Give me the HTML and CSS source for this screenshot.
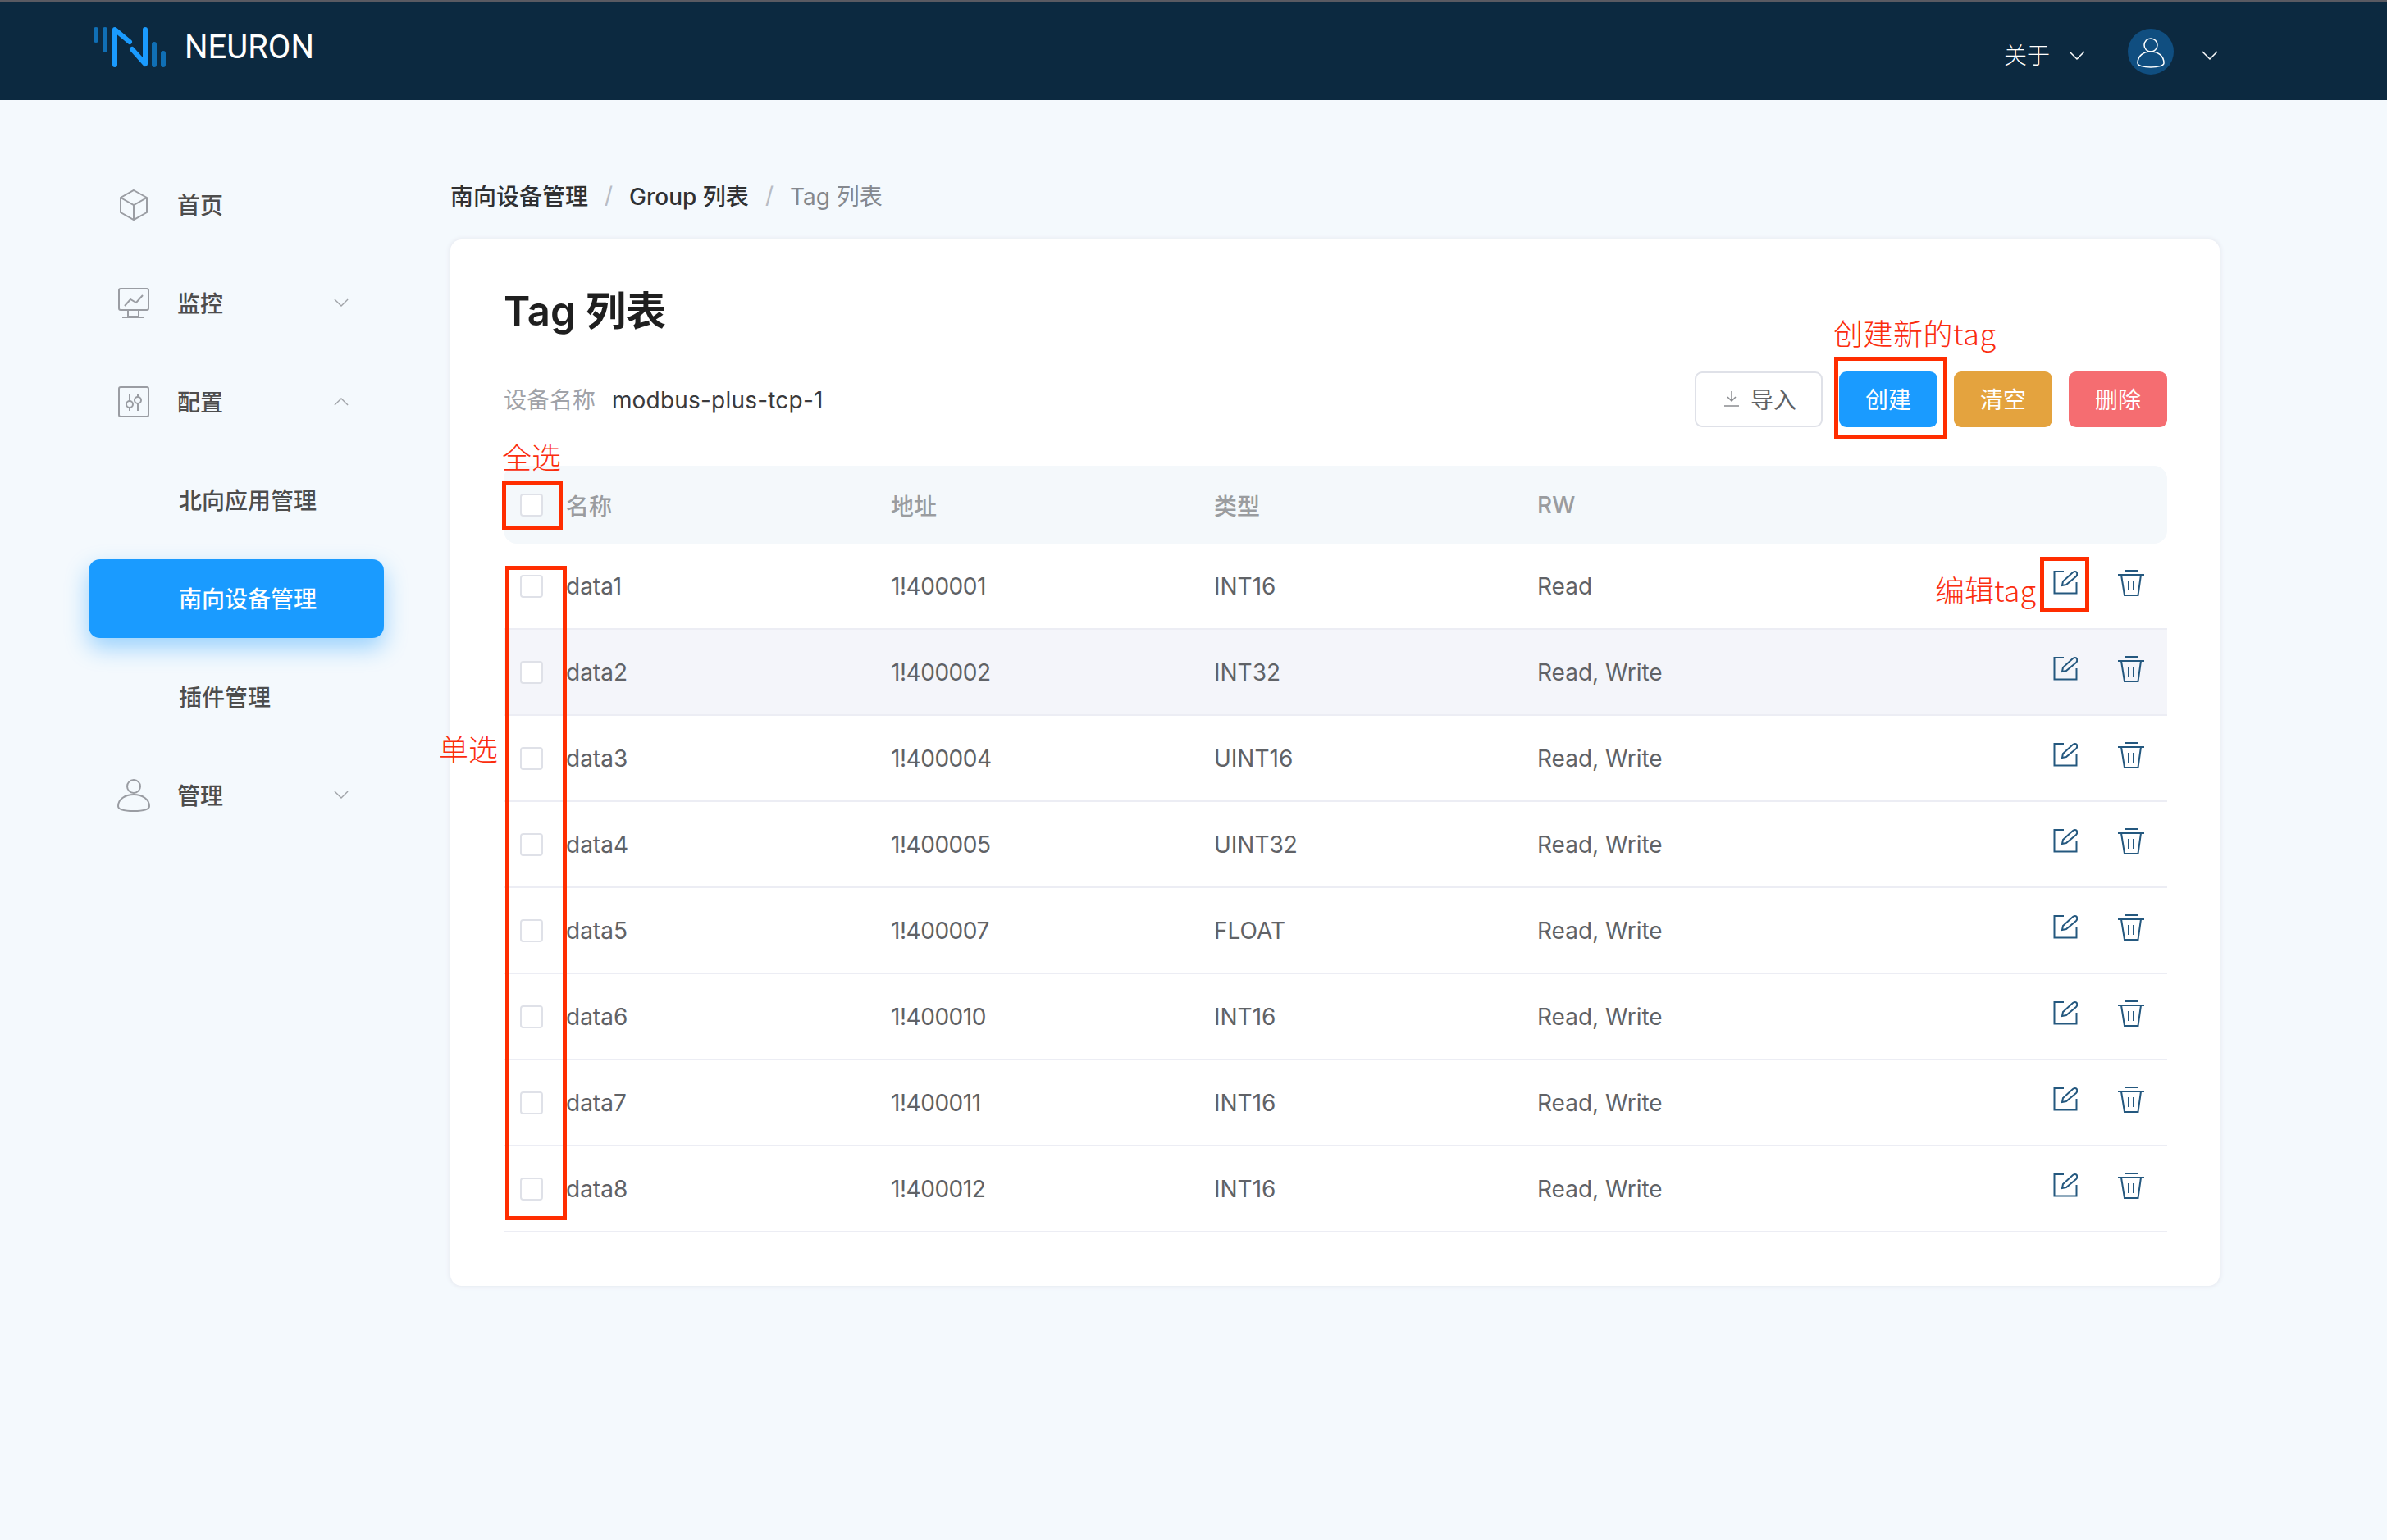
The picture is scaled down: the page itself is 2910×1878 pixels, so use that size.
FILE: index.html
```html
<!DOCTYPE html>
<html lang="zh">
<head>
  <meta charset="utf-8">
  <title>Tag 列表 - Neuron</title>
  <link rel="stylesheet" href="styles.css">
</head>
<body>
<svg class="sprites" width="0" height="0">
  <symbol id="i-edit" viewBox="0 0 30 30"><path d="M13 2H1.500V28.500H28.500V15M11 19L12 14L24 3Q27 1 28.800 3Q30 6 28 8L16 18Z"/></symbol>
  <symbol id="i-trash" viewBox="0 0 32 32"><path d="M8 1H24M0 6H32M4 6L8 31H24.500L28 6M13 13V25M19 13V25"/></symbol>
  <symbol id="i-down" viewBox="0 0 20 12"><path d="M1 1L10 10L19 1"/></symbol>
  <symbol id="i-up" viewBox="0 0 20 12"><path d="M1 11L10 2L19 11"/></symbol>
</svg>

<header class="topbar">
  <div class="brand">
    <svg class="logo" width="92" height="50" viewBox="0 0 92 50">
      <path class="logo-dim" d="M5 4V17M16 4V29M76 22V47M87 33V47"/>
      <path class="logo-main" d="M28 47V4L46 19M49 28L65 46V4"/>
    </svg>
    <span class="brand-name">NEURON</span>
  </div>
  <div class="top-actions">
    <span class="top-link">关于</span>
    <svg class="chev chev-light"><use href="#i-down"/></svg>
    <span class="avatar">
      <svg width="36" height="48" viewBox="0 0 36 48">
        <circle cx="18" cy="13" r="8"/>
        <path d="M2 35C2 26 9 21 18 21C27 21 34 26 34 35C34 38 27 40 18 40C9 40 2 38 2 35Z"/>
      </svg>
    </span>
    <svg class="chev chev-light"><use href="#i-down"/></svg>
  </div>
</header>

<div class="layout">
  <nav class="sidebar">
    <a class="nav-item">
      <svg class="nav-icon" viewBox="0 0 40 40"><path d="M20 2L36 11V29L20 38L4 29V11ZM4 11L20 20L36 11M20 20V38"/></svg>
      <span class="nav-text">首页</span>
    </a>
    <a class="nav-item">
      <svg class="nav-icon" viewBox="0 0 40 40"><rect x="2" y="2" width="36" height="26" rx="2"/><path d="M9 23L16 15L23 19L31 10M13 28V36H26V28M6 37H33"/></svg>
      <span class="nav-text">监控</span>
      <svg class="chev"><use href="#i-down"/></svg>
    </a>
    <a class="nav-item">
      <svg class="nav-icon" viewBox="0 0 40 40"><rect x="2" y="2" width="36" height="36" rx="2"/><circle cx="15" cy="23" r="4"/><circle cx="25" cy="18" r="4"/><path d="M15 10V19M15 27V31M25 10V14M25 22V31"/></svg>
      <span class="nav-text">配置</span>
      <svg class="chev"><use href="#i-up"/></svg>
    </a>
    <a class="nav-item nav-sub"><span class="nav-text">北向应用管理</span></a>
    <a class="nav-item nav-sub nav-active"><span class="nav-text">南向设备管理</span></a>
    <a class="nav-item nav-sub"><span class="nav-text">插件管理</span></a>
    <a class="nav-item">
      <svg class="nav-icon" viewBox="0 0 40 40"><circle cx="20" cy="9" r="8"/><path d="M1 33C1 25 9 19 20 19C31 19 39 25 39 33C39 37 31 39 20 39C9 39 1 37 1 33Z"/></svg>
      <span class="nav-text">管理</span>
      <svg class="chev"><use href="#i-down"/></svg>
    </a>
  </nav>

  <main class="content">
    <div class="breadcrumb">
      <span class="crumb">南向设备管理</span>
      <span class="crumb-sep">/</span>
      <span class="crumb">Group 列表</span>
      <span class="crumb-sep">/</span>
      <span class="crumb crumb-last">Tag 列表</span>
    </div>

    <section class="card">
      <h1 class="card-title">Tag 列表</h1>
      <div class="toolbar">
        <div class="device">
          <span class="device-label">设备名称</span>
          <span class="device-name">modbus-plus-tcp-1</span>
        </div>
        <div class="buttons">
          <button class="btn btn-plain">
            <svg class="import-icon" viewBox="0 0 20 20"><path d="M10 1V13M5 8L10 13L15 8M1 19H19"/></svg>
            导入
          </button>
          <button class="btn btn-blue">创建</button>
          <button class="btn btn-orange">清空</button>
          <button class="btn btn-red">删除</button>
        </div>
      </div>

      <div class="tag-table">
        <div class="tag-row tag-head">
          <span class="check"></span><span>名称</span><span>地址</span><span>类型</span><span>RW</span><span></span>
        </div>
        <div class="tag-row">
          <span class="check"></span><span>data1</span><span class="addr">1!400001</span><span>INT16</span><span>Read</span>
          <span class="row-actions"><svg class="act act-edit"><use href="#i-edit"/></svg><svg class="act act-trash"><use href="#i-trash"/></svg></span>
        </div>
        <div class="tag-row tag-row-hover">
          <span class="check"></span><span>data2</span><span class="addr">1!400002</span><span>INT32</span><span>Read, Write</span>
          <span class="row-actions"><svg class="act act-edit"><use href="#i-edit"/></svg><svg class="act act-trash"><use href="#i-trash"/></svg></span>
        </div>
        <div class="tag-row">
          <span class="check"></span><span>data3</span><span class="addr">1!400004</span><span>UINT16</span><span>Read, Write</span>
          <span class="row-actions"><svg class="act act-edit"><use href="#i-edit"/></svg><svg class="act act-trash"><use href="#i-trash"/></svg></span>
        </div>
        <div class="tag-row">
          <span class="check"></span><span>data4</span><span class="addr">1!400005</span><span>UINT32</span><span>Read, Write</span>
          <span class="row-actions"><svg class="act act-edit"><use href="#i-edit"/></svg><svg class="act act-trash"><use href="#i-trash"/></svg></span>
        </div>
        <div class="tag-row">
          <span class="check"></span><span>data5</span><span class="addr">1!400007</span><span>FLOAT</span><span>Read, Write</span>
          <span class="row-actions"><svg class="act act-edit"><use href="#i-edit"/></svg><svg class="act act-trash"><use href="#i-trash"/></svg></span>
        </div>
        <div class="tag-row">
          <span class="check"></span><span>data6</span><span class="addr">1!400010</span><span>INT16</span><span>Read, Write</span>
          <span class="row-actions"><svg class="act act-edit"><use href="#i-edit"/></svg><svg class="act act-trash"><use href="#i-trash"/></svg></span>
        </div>
        <div class="tag-row">
          <span class="check"></span><span>data7</span><span class="addr">1!400011</span><span>INT16</span><span>Read, Write</span>
          <span class="row-actions"><svg class="act act-edit"><use href="#i-edit"/></svg><svg class="act act-trash"><use href="#i-trash"/></svg></span>
        </div>
        <div class="tag-row">
          <span class="check"></span><span>data8</span><span class="addr">1!400012</span><span>INT16</span><span>Read, Write</span>
          <span class="row-actions"><svg class="act act-edit"><use href="#i-edit"/></svg><svg class="act act-trash"><use href="#i-trash"/></svg></span>
        </div>
      </div>
    </section>
  </main>
</div>

<!-- red notes drawn over the screenshot -->
<span class="note note-all">全选</span>
<span class="note note-one">单选</span>
<span class="note note-create">创建新的tag</span>
<span class="note note-edit">编辑tag</span>
<div class="mark mark-all"></div>
<div class="mark mark-one"></div>
<div class="mark mark-create"></div>
<div class="mark mark-edit"></div>
</body>
</html>
```

FILE: styles.css
```css
* {
  box-sizing: border-box;
}
html, body {
  margin: 0;
  padding: 0;
}
body {
  position: relative;
  width: 2910px;
  height: 1878px;
  overflow: hidden;
  background: #f4f9fd;
  font-family: Inter, "Noto Sans CJK SC", sans-serif;
  font-size: 28px;
  color: #606266;
}
.sprites {
  position: absolute;
}

/* top bar */
.topbar {
  display: flex;
  justify-content: space-between;
  height: 122px;
  background: #0c2940;
  border-top: 2px solid #5a5a62;
}
.brand {
  display: flex;
  align-items: center;
  height: 52px;
  margin: 29px 0 0 112px;
}
.logo {
  fill: none;
  stroke-width: 6px;
  stroke-linecap: round;
  stroke-linejoin: round;
}
.logo-dim {
  stroke: #106fb5;
}
.logo-main {
  stroke: #1a9bff;
}
.brand-name {
  margin-left: 21px;
  font-family: Roboto, sans-serif;
  font-size: 40px;
  color: #fff;
}
.top-actions {
  display: flex;
  align-items: center;
  height: 57px;
  margin: 32px 206px 0 0;
}
.top-link {
  margin-top: 6px;
  margin-right: -2px;
  margin-left: 2px;
  font-family: "Noto Sans CJK SC", sans-serif;
  font-weight: 300;
  color: #fff;
}
.chev {
  width: 18px;
  height: 11px;
  fill: none;
  stroke: #a0a3a8;
  stroke-width: 1.500px;
}
.chev-light {
  width: 20px;
  height: 12px;
  margin: 10px 0 0 25px;
  stroke: #fff;
  stroke-width: 1.500px;
}
.avatar {
  display: flex;
  justify-content: center;
  width: 56px;
  height: 56px;
  margin-left: 52px;
  margin-right: 9px;
  border-radius: 50%;
  background: #104e80;
}
.avatar svg {
  margin-top: 7px;
  fill: none;
  stroke: #fff;
  stroke-width: 1.500px;
}

/* side menu */
.layout {
  display: flex;
}
.sidebar {
  display: flex;
  flex-direction: column;
  gap: 24px;
  width: 360px;
  margin: 80px 81px 0 108px;
}
.nav-item {
  display: flex;
  align-items: center;
  height: 96px;
  padding-left: 108px;
  position: relative;
  font-weight: 500;
  color: #4d4d4d;
}
.nav-text {
  margin-top: -3px;
}
.nav-sub {
  padding-left: 110px;
}
.nav-active {
  border-radius: 14px;
  background: #1a9bff;
  color: #fff;
  box-shadow: 0 12px 28px rgba(26, 155, 255, 0.42);
}
.nav-icon {
  position: absolute;
  left: 35px;
  top: 28px;
  width: 40px;
  height: 40px;
  fill: none;
  stroke: #9a9da3;
  stroke-width: 2px;
}
.nav-item .chev {
  position: absolute;
  left: 299px;
  top: 42px;
}

/* content */
.content {
  width: 2157px;
}
.breadcrumb {
  display: flex;
  align-items: center;
  height: 40px;
  margin-top: 96px;
  font-weight: 500;
  color: #303133;
}
.crumb-sep {
  margin: 0 20px;
  font-weight: 400;
  color: #b8bcc4;
}
.crumb-last {
  font-weight: 400;
  color: #85888e;
}
.card {
  height: 1276px;
  margin-top: 34px;
  padding: 64px 64px 0 65px;
  border-radius: 14px;
  background: #fff;
  box-shadow: 0 0 4px 2px #e9ecf2;
}
.card-title {
  height: 48px;
  margin: 0;
  font-size: 49px;
  font-weight: 600;
  line-height: 48px;
  color: #1f1f1f;
}
.toolbar {
  display: flex;
  justify-content: space-between;
  align-items: center;
  height: 68px;
  margin-top: 49px;
}
.device {
  margin-top: -2px;
}
.device-label {
  margin-right: 12px;
  color: #a0a2a8;
}
.device-name {
  letter-spacing: 0.2px;
  color: #3a3a3c;
}
.buttons {
  display: flex;
  gap: 20px;
}
.btn {
  display: flex;
  justify-content: center;
  align-items: center;
  width: 120px;
  height: 68px;
  padding: 0 0 2px;
  border: 0;
  border-radius: 9px;
  font-family: inherit;
  font-size: 28px;
  color: #fff;
}
.btn-plain {
  width: 156px;
  padding-left: 3px;
  border: 2px solid #dfe1e8;
  background: #fff;
  color: #606266;
}
.import-icon {
  width: 20px;
  height: 20px;
  margin-right: 13px;
  fill: none;
  stroke: #8a8c90;
  stroke-width: 1.500px;
}
.btn-blue {
  background: #1a9bff;
}
.btn-orange {
  background: #e4a33e;
}
.btn-red {
  background: #f56d71;
}

/* table */
.tag-table {
  margin-top: 47px;
}
.tag-row {
  display: grid;
  grid-template-columns: 76px 396px 394px 394px 1fr auto;
  align-items: center;
  height: 105px;
  border-bottom: 2px solid #ecedf4;
}
.tag-head {
  height: 95px;
  border-bottom: 0;
  border-radius: 16px;
  background: #f4f8fb;
  font-weight: 500;
  color: #9a9c9f;
}
.tag-row-hover {
  background: #f4f5fa;
}
.addr {
  letter-spacing: -0.45px;
}
.check {
  display: block;
  width: 28px;
  height: 28px;
  margin-left: 20px;
  border: 2px solid #dfe1e8;
  border-radius: 4px;
  background: #fff;
}
.row-actions {
  display: flex;
  gap: 49px;
  margin: -7px 28px 0 0;
}
.act {
  fill: none;
  stroke: #24587f;
  stroke-width: 2px;
}
.act-edit {
  width: 30px;
  height: 30px;
}
.act-trash {
  width: 32px;
  height: 32px;
}

/* annotations */
.note {
  position: absolute;
  font-family: "Noto Sans CJK SC", sans-serif;
  font-size: 36px;
  font-weight: 300;
  line-height: 40px;
  color: #fb2d0e;
  white-space: nowrap;
}
.note-all {
  left: 612px;
  top: 536px;
}
.note-one {
  left: 535px;
  top: 892px;
}
.note-create {
  left: 2235px;
  top: 385px;
  letter-spacing: 0.5px;
}
.note-edit {
  left: 2359px;
  top: 698px;
}
.mark {
  position: absolute;
  border: 5px solid #ff2d00;
}
.mark-all {
  left: 612px;
  top: 587px;
  width: 74px;
  height: 59px;
}
.mark-one {
  left: 616px;
  top: 690px;
  width: 75px;
  height: 798px;
}
.mark-create {
  left: 2236px;
  top: 435px;
  width: 138px;
  height: 100px;
}
.mark-edit {
  left: 2487px;
  top: 679px;
  width: 60px;
  height: 67px;
}
```
